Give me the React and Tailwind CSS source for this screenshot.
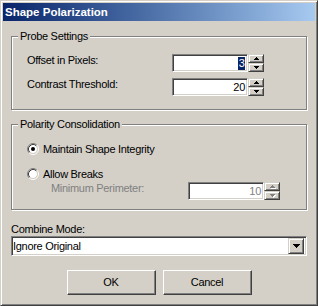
import React from "react";

const raised =
  "border border-t-[#d4d0c8] border-l-[#d4d0c8] border-b-[#404040] border-r-[#404040] shadow-[inset_1px_1px_0_#fff,inset_-1px_-1px_0_#808080]";
const sunken =
  "border border-t-[#808080] border-l-[#808080] border-b-white border-r-white shadow-[inset_1px_1px_0_#404040,inset_-1px_-1px_0_#d4d0c8]";

function Arrow({ dir, disabled, wide }) {
  const rows = wide
    ? [
        [0, 7],
        [1, 5],
        [2, 3],
        [3, 1],
      ]
    : [
        [0, 5],
        [1, 3],
        [2, 1],
      ];
  const h = rows.length;
  const w = wide ? 7 : 5;
  const rects = rows.map(([i, len]) => {
    const y = dir === "up" ? h - 1 - i : i;
    return { x: i, y, len };
  });
  return (
    <svg width={w + 1} height={h + 1} shapeRendering="crispEdges" className="block">
      {disabled &&
        rects.map((r, k) => (
          <rect key={"s" + k} x={r.x + 1} y={r.y + 1} width={r.len} height={1} fill="#fff" />
        ))}
      {rects.map((r, k) => (
        <rect key={k} x={r.x} y={r.y} width={r.len} height={1} fill={disabled ? "#808080" : "#000"} />
      ))}
    </svg>
  );
}

function SpinBtn({ dir, disabled }) {
  return (
    <div className={`h-[9px] w-[16px] bg-[#d4d0c8] ${raised} flex items-center justify-center`}>
      <div className="ml-[1px]">
        <Arrow dir={dir} disabled={disabled} />
      </div>
    </div>
  );
}

function Spinner({ value, selected, disabled }) {
  return (
    <div className="flex">
      <div
        className={`w-[76px] h-[18px] bg-white ${sunken} flex items-center justify-end pr-[2px] leading-[13px] ${
          disabled ? "text-[#808080]" : "text-black"
        }`}
      >
        {selected ? <span className="bg-[#0a246a] text-white px-[0.5px]">{value}</span> : value}
      </div>
      <div className="flex flex-col">
        <SpinBtn dir="up" disabled={disabled} />
        <SpinBtn dir="down" disabled={disabled} />
      </div>
    </div>
  );
}

function Radio({ checked }) {
  return (
    <svg width="12" height="12" viewBox="0 0 12 12" className="block shrink-0">
      <circle cx="6" cy="6" r="4.2" fill="#fff" />
      <path d="M2.11 9.89 A5.5 5.5 0 0 1 9.89 2.11" stroke="#808080" strokeWidth="1" fill="none" />
      <path d="M9.89 2.11 A5.5 5.5 0 0 1 2.11 9.89" stroke="#fff" strokeWidth="1" fill="none" />
      <path d="M2.82 9.18 A4.5 4.5 0 0 1 9.18 2.82" stroke="#404040" strokeWidth="1" fill="none" />
      <path d="M9.18 2.82 A4.5 4.5 0 0 1 2.82 9.18" stroke="#d4d0c8" strokeWidth="1" fill="none" />
      {checked && <circle cx="6" cy="6" r="2" fill="#000" />}
    </svg>
  );
}

function Group({ title, children, className = "" }) {
  return (
    <fieldset
      className={`border border-[#808080] shadow-[1px_1px_0_#fff,inset_1px_1px_0_#fff] p-0 m-0 min-w-0 ${className}`}
    >
      <legend className="ml-[6px] px-[2px] leading-[13px] bg-[#d4d0c8]">{title}</legend>
      {children}
    </fieldset>
  );
}

function Button({ children }) {
  return (
    <div className="w-[89px] h-[25px] bg-[#d4d0c8] border border-t-white border-l-white border-b-[#404040] border-r-[#404040] shadow-[inset_-1px_-1px_0_#808080] flex items-center justify-center leading-[13px]">
      {children}
    </div>
  );
}

export default function App() {
  return (
    <div className="w-[318px] h-[306px] bg-[#d4d0c8] border border-t-[#d4d0c8] border-l-[#d4d0c8] border-b-[#404040] border-r-[#404040] shadow-[inset_1px_1px_0_#fff,inset_-1px_-1px_0_#808080] p-[2px] flex flex-col text-[11px] tracking-[-0.3px] text-black font-['Liberation_Sans',Arial,sans-serif] overflow-hidden select-none">
      <div className="h-[18px] shrink-0 bg-gradient-to-r from-[#0a246a] to-[#a6caf0] flex items-center pl-[2px]">
        <span className="text-white font-bold text-[11.5px] tracking-[0px] leading-[14px]">Shape Polarization</span>
      </div>

      <div className="flex flex-col px-[8px] pt-[9px]">
        <Group title="Probe Settings">
          <div className="flex flex-col gap-[6px] pt-[11px] pb-[13px] pl-[15px]">
            <div className="flex items-center">
              <div className="w-[145px] leading-[13px] -mt-[5px]">Offset in Pixels:</div>
              <Spinner value="3" selected />
            </div>
            <div className="flex items-center">
              <div className="w-[145px] leading-[13px] -mt-[5px]">Contrast Threshold:</div>
              <Spinner value="20" />
            </div>
          </div>
        </Group>

        <Group title="Polarity Consolidation" className="mt-[8px]">
          <div className="flex flex-col pt-[12px] pb-[9px] pl-[15px]">
            <div className="flex items-center gap-[4px] h-[12px] leading-[13px]">
              <Radio checked />
              <span>Maintain Shape Integrity</span>
            </div>
            <div className="flex items-center gap-[4px] h-[12px] mt-[13px] leading-[13px]">
              <Radio />
              <span>Allow Breaks</span>
            </div>
            <div className="flex items-center mt-[2px]">
              <div className="w-[161px] pl-[24px] leading-[13px] text-[#808080] -mt-[5px]">Minimum Perimeter:</div>
              <Spinner value="10" disabled />
            </div>
          </div>
        </Group>

        <div className="mt-[13px] leading-[13px]">Combine Mode:</div>
        <div className={`h-[20px] bg-white ${sunken} flex items-center justify-between pr-[2px] pl-[1px]`}>
          <span className="leading-[13px]">Ignore Original</span>
          <div className={`w-[16px] h-[16px] bg-[#d4d0c8] ${raised} flex items-center justify-center`}>
            <div className="ml-[1px] mt-[1px]">
              <Arrow dir="down" wide />
            </div>
          </div>
        </div>

        <div className="flex justify-center gap-[7px] mt-[14px]">
          <Button>OK</Button>
          <Button>Cancel</Button>
        </div>
      </div>
    </div>
  );
}
